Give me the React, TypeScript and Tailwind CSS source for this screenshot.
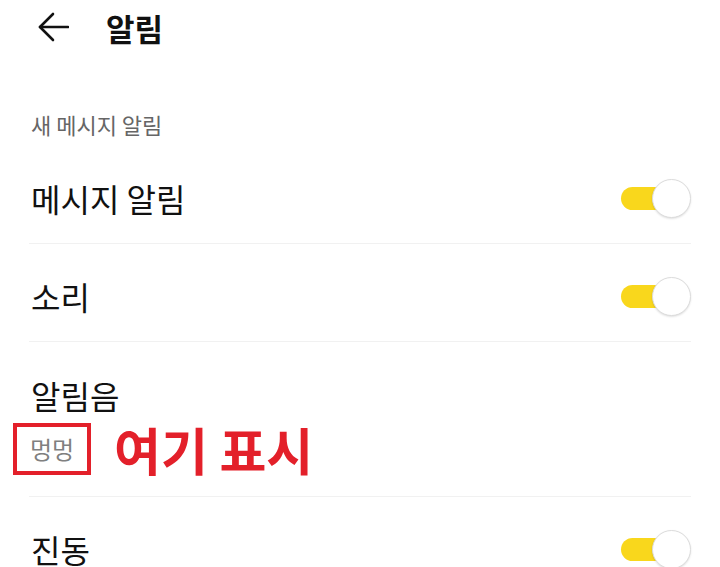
import React from 'react';

const font = { fontFamily: '"Noto Sans CJK KR", "Noto Sans", sans-serif' };

function Toggle() {
  // yellow track with the white knob pushed to the right (on state)
  return (
    <div className="relative h-[40px] w-[70px] shrink-0">
      <div className="absolute left-0 top-[9px] h-[23px] w-[52px] rounded-full bg-[#f9d71c]" />
      <div className="absolute right-0 top-[1px] h-[39px] w-[39px] rounded-full border border-[#dcdcdc] bg-white shadow-[0_1px_2px_rgba(0,0,0,0.12)]" />
    </div>
  );
}

function Row({ label, last }: { label: string; last?: boolean }) {
  return (
    <div className={`flex h-[98px] items-center justify-between pt-[6px] ${last ? '' : 'border-b border-[#f1f1f1]'}`}>
      <span className="pl-[2px] text-[32px] leading-none text-[#111]">{label}</span>
      <Toggle />
    </div>
  );
}

export default function App() {
  return (
    <div className="h-[567px] w-[720px] overflow-hidden bg-white" style={font}>
      {/* top bar */}
      <div className="flex h-[54px] items-center pl-[38px]">
        <svg width="31" height="30" viewBox="0 0 31 30" fill="none" stroke="#111" strokeWidth="2.6" strokeLinecap="round" strokeLinejoin="round">
          <path d="M2 15H30" />
          <path d="M15 2L2 15L15 28" />
        </svg>
        <h1 className="ml-[37px] text-[31px] font-bold leading-none text-[#111]">알림</h1>
      </div>

      <div className="px-[29px]">
        <div className="mt-[59px] h-[22px] pl-[2px] text-[22px] leading-none text-[#666]">새 메시지 알림</div>

        <div className="mt-[11px]">
          <Row label="메시지 알림" />
          <Row label="소리" />

          {/* ringtone row */}
          <div className="flex h-[155px] flex-col border-b border-[#f1f1f1] pt-[37px]">
            <span className="pl-[2px] text-[32px] leading-none text-[#111]">알림음</span>
            <div className="mt-[12px] flex items-center">
              <div className="-ml-[16px] flex h-[52px] w-[78px] items-center justify-center border-[4px] border-[#e3202a]">
                <span className="text-[24px] leading-none text-[#808080]">멍멍</span>
              </div>
              <span className="ml-[23px] text-[51px] font-bold leading-none text-[#e3202a]">여기 표시</span>
            </div>
          </div>

          <Row label="진동" last />
        </div>
      </div>
    </div>
  );
}
